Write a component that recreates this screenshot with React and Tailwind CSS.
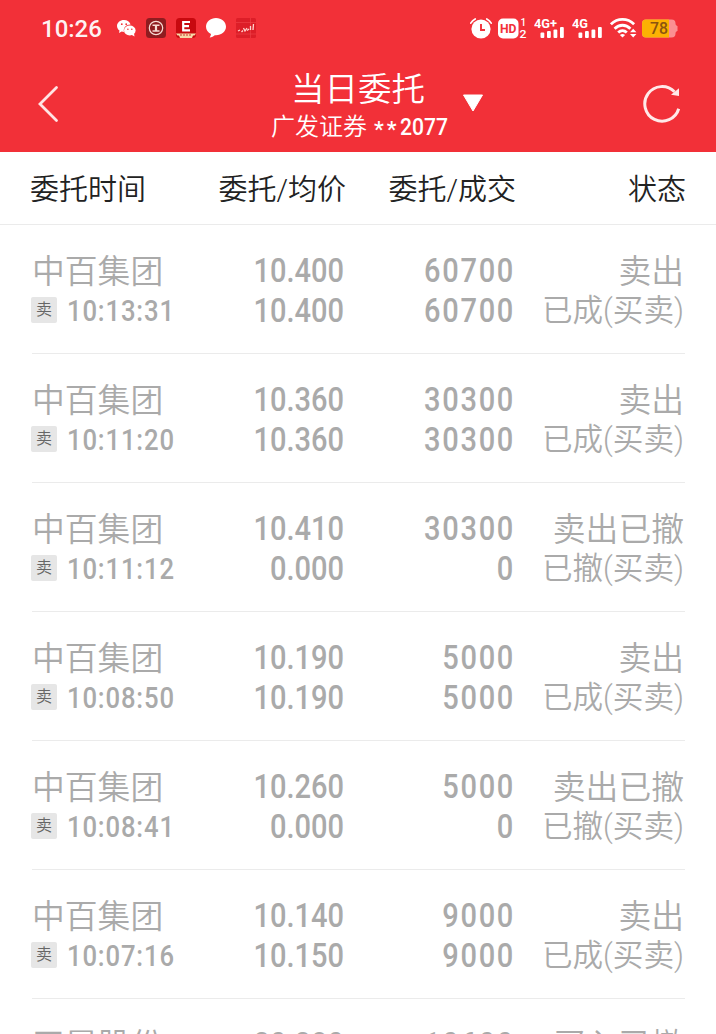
import { clsx } from 'clsx'

const orders = [
  { name: '中百集团', time: '10:13:31', price: '10.400', avg: '10.400', qty: '60700', filled: '60700', status: '卖出', detail: '已成(买卖)' },
  { name: '中百集团', time: '10:11:20', price: '10.360', avg: '10.360', qty: '30300', filled: '30300', status: '卖出', detail: '已成(买卖)' },
  { name: '中百集团', time: '10:11:12', price: '10.410', avg: '0.000', qty: '30300', filled: '0', status: '卖出已撤', detail: '已撤(买卖)' },
  { name: '中百集团', time: '10:08:50', price: '10.190', avg: '10.190', qty: '5000', filled: '5000', status: '卖出', detail: '已成(买卖)' },
  { name: '中百集团', time: '10:08:41', price: '10.260', avg: '0.000', qty: '5000', filled: '0', status: '卖出已撤', detail: '已撤(买卖)' },
  { name: '中百集团', time: '10:07:16', price: '10.140', avg: '10.150', qty: '9000', filled: '9000', status: '卖出', detail: '已成(买卖)' },
  { name: '天晟股份', time: '10:05:32', price: '20.280', avg: '0.000', qty: '10600', filled: '0', status: '买入已撤', detail: '已撤(买卖)' },
]

function WechatIcon() {
  return (
    <svg className="w-[19px] h-[17px]" viewBox="0 0 19 17">
      <path d="M7 0C3 0 0 2.700 0 6c0 1.900 1 3.500 2.500 4.600L2 13l2.700-1.400c.8.200 1.600.300 2.300.3C6 8 9 4.500 13.600 4.600 12.900 1.900 10.200 0 7 0z" fill="#fff" />
      <ellipse cx="12.800" cy="10.500" rx="5.800" ry="4.900" fill="#fff" />
      <path d="M14 14.500l3.500 2-.5-3.200z" fill="#fff" />
      <g fill="#f23038">
        <circle cx="4.800" cy="4.200" r="0.900" />
        <circle cx="9.200" cy="4.200" r="0.900" />
        <circle cx="10.900" cy="9.200" r="0.800" />
        <circle cx="14.800" cy="9.200" r="0.800" />
      </g>
    </svg>
  )
}

function BankIcon() {
  return (
    <svg className="w-5 h-5" viewBox="0 0 20 20">
      <rect width="20" height="20" rx="3.500" fill="#8f1c20" />
      <g fill="none" stroke="#f7dcd5">
        <circle cx="10" cy="10" r="6.700" strokeWidth="1.200" />
        <path d="M6.500 7.200h7M6.500 13h7" strokeWidth="1.500" />
        <path d="M10 7v6" strokeWidth="2.200" />
      </g>
    </svg>
  )
}

function BrokerIcon() {
  return (
    <svg className="w-5 h-5" viewBox="0 0 20 20">
      <rect width="20" height="20" rx="3.500" fill="#c8090f" />
      <path d="M14 4H7.200v8.300H14M7.500 8.200H13" fill="none" stroke="#fff" strokeWidth="2.200" />
      <path d="M0 15.500h20l-1.500 2H17L16 20H4l-1-2.500H1.500z" fill="#f6d9a8" />
      <path d="M4 17h12" stroke="#c8090f" strokeWidth="0.800" strokeDasharray="2 1" />
    </svg>
  )
}

function ChatIcon() {
  return (
    <svg className="w-5 h-5" viewBox="0 0 20 20">
      <path d="M10 0C4.500 0 0 3.800 0 8.700c0 3.200 2 6 5 7.400-.2 1.400-.7 2.500-1.400 3.500 2.300-.2 4-1.200 5.200-2.400H10c5.500 0 10-3.700 10-8.500S15.500 0 10 0z" fill="#fff" />
    </svg>
  )
}

function StockIcon() {
  return (
    <svg className="w-5 h-5" viewBox="0 0 20 20">
      <rect width="20" height="20" rx="1.500" fill="#dd1e28" />
      <path d="M0 4.500h20M0 16h20M14.500 0v20" stroke="#f0434a" strokeWidth="0.600" />
      <path d="M2 13l2-1M5.500 14l1.500-1.500M7.500 10l1.500 3 2-3M11 12.500l2-1.500M14.500 8v4M17.500 6l-.5 6" fill="none" stroke="#ffd5cf" strokeWidth="1.300" />
    </svg>
  )
}

function AlarmIcon() {
  return (
    <svg className="w-[22px] h-[21px]" viewBox="0 0 22 21">
      <circle cx="11" cy="11" r="9.600" fill="#fff" />
      <path d="M.8 5.200C1.800 3.300 3.200 2 5.200 1M21.200 5.200c-1-1.900-2.400-3.200-4.400-4.200" stroke="#fff" strokeWidth="1.700" fill="none" strokeLinecap="round" />
      <path d="M11 6v6h4" stroke="#f23038" strokeWidth="1.900" fill="none" />
    </svg>
  )
}

function HdIcon() {
  return (
    <svg className="w-[29px] h-[23px]" viewBox="0 -1 29 23">
      <rect y="0.500" width="20.500" height="20" rx="5" fill="#fff" />
      <g fontFamily="Roboto, sans-serif">
        <text x="2" y="15" fontSize="12.500" fontWeight="700" fill="#f23038" textLength="16.500" lengthAdjust="spacingAndGlyphs">HD</text>
        <text x="22.500" y="8" fontSize="10" fontWeight="500" fill="#fff">1</text>
        <text x="21.500" y="19.500" fontSize="10" fontWeight="500" fill="#fff" textLength="7" lengthAdjust="spacingAndGlyphs">2</text>
      </g>
    </svg>
  )
}

function SignalIcon({ label, width }) {
  return (
    <svg className="w-[31px] h-[22px]" viewBox="0 0 31 22">
      <text x="0" y="10.500" fontFamily="Roboto, sans-serif" fontSize="13" fontWeight="700" fill="#fff" textLength={width} lengthAdjust="spacingAndGlyphs">{label}</text>
      <g fill="#fff">
        <rect x="6.500" y="15.500" width="3.800" height="5.500" rx="1" />
        <rect x="13" y="14" width="3.800" height="7" rx="1" />
        <rect x="19.500" y="12.500" width="3.800" height="8.500" rx="1" />
        <rect x="26" y="10" width="3.800" height="11" rx="1" />
      </g>
    </svg>
  )
}

function WifiIcon() {
  return (
    <svg className="w-[27px] h-[20px]" viewBox="0 0 27 20">
      <g fill="none" stroke="#fff" strokeWidth="2.800">
        <path d="M.9 6.300C7.500-.2 17.500-.2 24.100 6.300" />
        <path d="M4.600 10.700c4.600-4.600 11.200-4.600 15.800 0" />
        <path d="M8.200 14.600c2.600-2.500 6-2.500 8.600 0" />
      </g>
      <path d="M12.500 19.500l-2.600-2.500c1.600-1.300 3.600-1.300 5.200 0z" fill="#fff" />
      <path d="M20 14.300l3.200-3.600 3.200 3.600zM20 16l3.200 3.600 3.200-3.600z" fill="#fff" />
    </svg>
  )
}

function Battery() {
  return (
    <svg className="w-9 h-[19px]" viewBox="0 0 36 19">
      <path d="M31 5.500h2.500l2 2v4l-2 2H31z" fill="#fb8f92" />
      <rect y="0.500" width="33.500" height="18" rx="4" fill="#fb8f92" />
      <path d="M4 .5h23v18H4a4 4 0 0 1-4-4v-10a4 4 0 0 1 4-4z" fill="#fcb103" />
      <text x="8" y="15.300" fontFamily="Roboto, sans-serif" fontSize="16.500" fontWeight="500" fill="#8a5410" textLength="18" lengthAdjust="spacingAndGlyphs">78</text>
    </svg>
  )
}

function StatusBar() {
  return (
    <div className="flex h-14 items-center justify-between pl-10 pr-[38px] text-white">
      <div className="flex items-center">
        <span className="w-[77px] pl-px pt-px text-[24px] font-medium text-white/95">10:26</span>
        <WechatIcon />
        <div className="ml-2.5 flex items-center gap-2.5">
          <BankIcon />
          <BrokerIcon />
          <ChatIcon />
          <StockIcon />
        </div>
      </div>
      <div className="flex items-center">
        <AlarmIcon />
        <div className="ml-1.5"><HdIcon /></div>
        <div className="ml-[7px]"><SignalIcon label="4G+" width={23} /></div>
        <div className="ml-[7px]"><SignalIcon label="4G" width={16} /></div>
        <div className="ml-[7px]"><WifiIcon /></div>
        <div className="ml-[5px]"><Battery /></div>
      </div>
    </div>
  )
}

function TitleBar() {
  return (
    <div className="flex h-24 items-center justify-between pl-9 pr-[33px] text-white">
      <svg className="w-6 h-10" viewBox="0 0 24 40">
        <path d="M20.500 3.500L4 20l16.500 16.500" fill="none" stroke="#ffe4e4" strokeWidth="2.800" strokeLinecap="round" />
      </svg>
      <div className="flex items-center pl-[51px] pt-1.5">
        <div className="flex w-[176px] flex-col items-center whitespace-nowrap">
          <span className="h-10 text-[33.500px] leading-[38px] font-[350]">当日委托</span>
          <div className="flex h-8 w-full items-center pl-px text-[24px] leading-8">
            <span className="font-[350]">广发证券</span>
            <span className="ml-[7px] pt-1.5 text-[22px] tracking-[3px] font-medium">**</span>
            <span className="origin-left scale-x-[0.88] font-medium">2077</span>
          </div>
        </div>
        <svg className="ml-4 mb-2 w-[22px] h-[18px]" viewBox="0 0 22 18">
          <path d="M1.500 1h19L11 17z" fill="#fff" stroke="#fff" strokeLinejoin="round" />
        </svg>
      </div>
      <svg className="w-10 h-10" viewBox="0 0 40 40">
        <path d="M35.700 24.800A17.300 17.300 0 1 1 31.500 7.800" fill="none" stroke="#ffe9e9" strokeWidth="3" />
        <path d="M36 4.200V12l-8-1.200z" fill="#ffe9e9" />
      </svg>
    </div>
  )
}

function TableHead() {
  return (
    <div className="flex h-[73px] shrink-0 items-center border-b border-[#ebebeb] px-[30px] pt-1.5 text-[29px] font-[350] text-[#222]">
      <span className="w-[158px]">委托时间</span>
      <span className="w-[158px] text-right">委托/均价</span>
      <span className="w-[170px] text-right">委托/成交</span>
      <span className="flex-1 text-right">状态</span>
    </div>
  )
}

function OrderRow({ order }) {
  return (
    <div className="mx-8 mr-[31px] flex h-[129px] shrink-0 border-b border-[#ebebeb] pt-[26px] text-[#aaa]">
      <div className="w-[156px] whitespace-nowrap">
        <div className="h-10 text-[32.800px] leading-[42px] font-[350]">{order.name}</div>
        <div className="-ml-px flex h-10 items-center">
          <span className="mb-[3px] flex h-[26px] w-[26px] shrink-0 items-center justify-center rounded-xs bg-[#e6e6e6] text-[16px] font-[350] text-[#666]">卖</span>
          <span className="ml-2.5 origin-left scale-x-[0.855] text-[30px] leading-10 tracking-[1px] font-medium">{order.time}</span>
        </div>
      </div>
      <NumberPair className="w-[156px]" top={order.price} bottom={order.avg} />
      <NumberPair className="w-[171px] -mr-px tracking-[1.900px]" top={order.qty} bottom={order.filled} />
      <div className="flex-1 pr-px text-right font-[350] whitespace-nowrap">
        <div className="h-10 text-[32.800px] leading-[42px]">{order.status}</div>
        <div className="h-10 text-[30.600px] leading-10">{order.detail}</div>
      </div>
    </div>
  )
}

function NumberPair({ className, top, bottom }) {
  return (
    <div className={clsx('text-right text-[33px] leading-10 font-medium', className)}>
      <div className="h-10 origin-right scale-x-[0.88]">{top}</div>
      <div className="h-10 origin-right scale-x-[0.88]">{bottom}</div>
    </div>
  )
}

export default function App() {
  return (
    <div className="flex h-[1034px] w-[716px] flex-col overflow-hidden bg-white font-[Roboto,'Noto_Sans_CJK_SC',sans-serif]">
      <header className="h-[152px] shrink-0 bg-[#f23038]">
        <StatusBar />
        <TitleBar />
      </header>
      <TableHead />
      {orders.map((order) => (
        <OrderRow key={order.time} order={order} />
      ))}
    </div>
  )
}
